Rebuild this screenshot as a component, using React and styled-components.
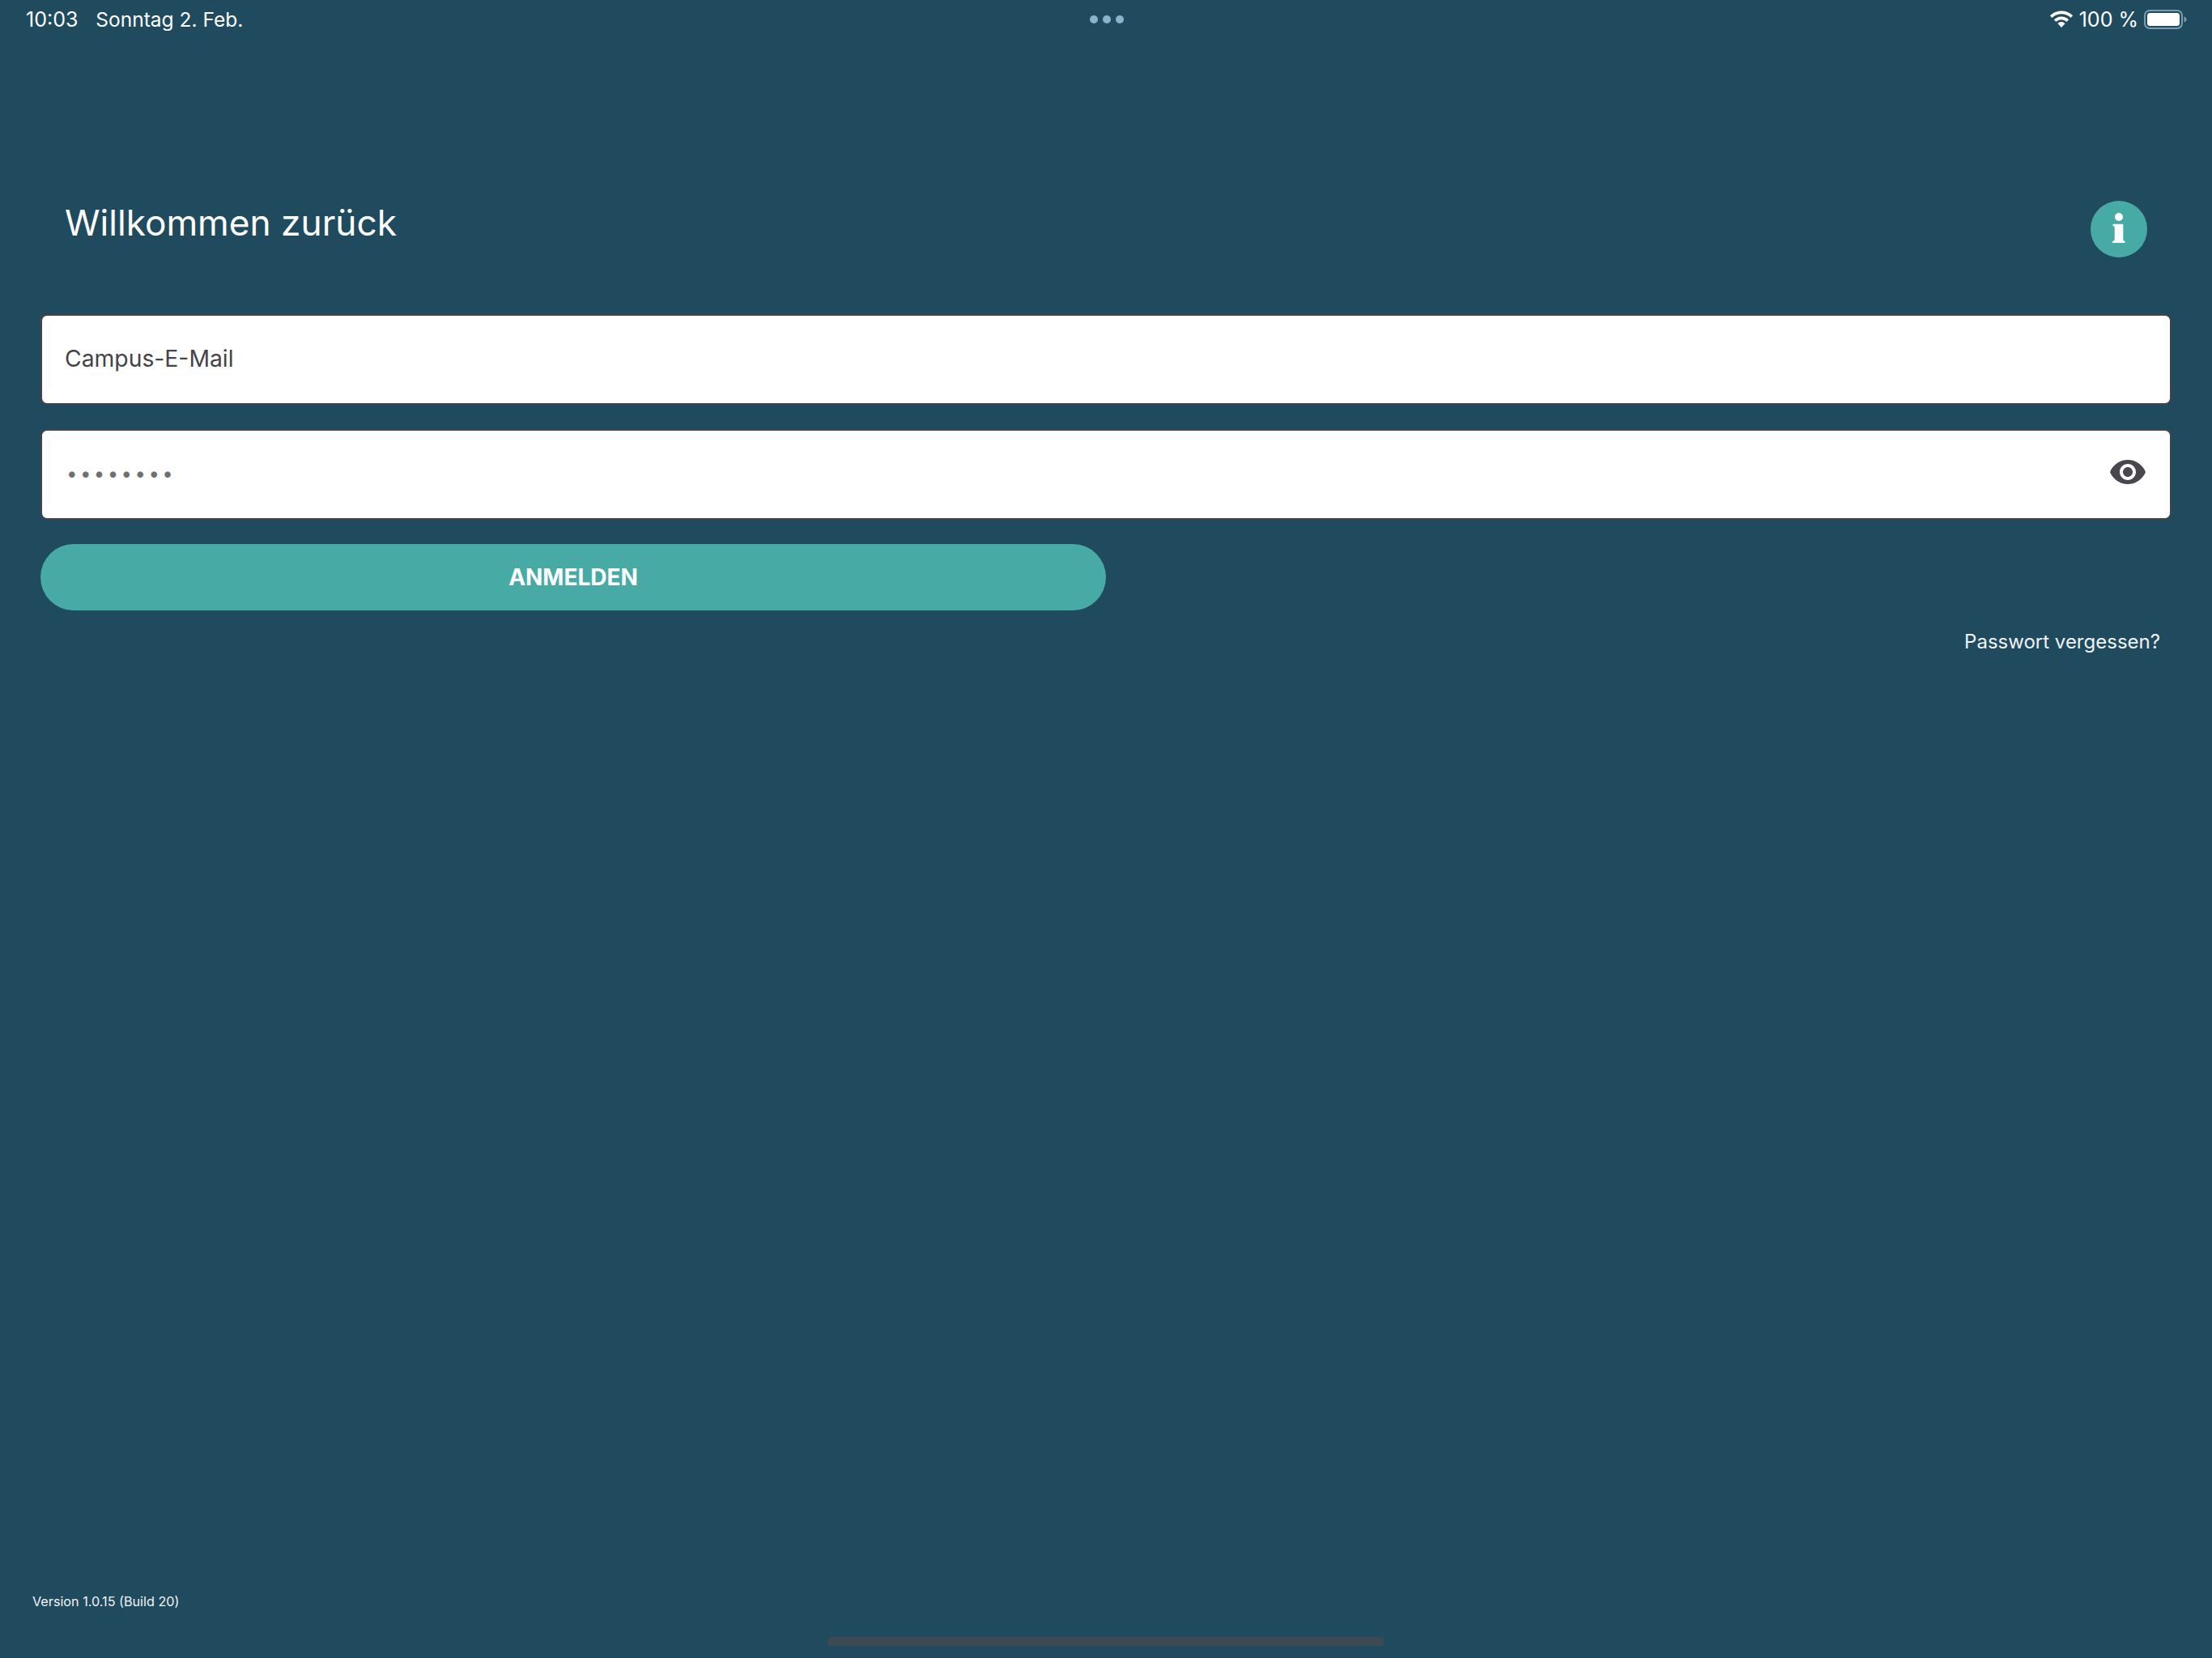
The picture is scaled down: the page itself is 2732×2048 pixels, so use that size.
import React from 'react'
import styled, { createGlobalStyle } from 'styled-components'
import { MdVisibility } from 'react-icons/md'

const GlobalStyle = createGlobalStyle`
  html, body {
    margin: 0;
    padding: 0;
    background: #204a5e;
  }
  body {
    font-family: Inter, "Noto Sans", sans-serif;
  }
`

const Page = styled.div`
  width: 2732px;
  height: 2048px;
  background: #204a5e;
  display: flex;
  flex-direction: column;
  overflow: hidden;
`

const StatusBar = styled.div`
  height: 47px;
  padding: 0 30px 0 32px;
  display: grid;
  grid-template-columns: 1fr auto 1fr;
  align-items: center;
  color: #fff;
  font-size: 24.5px;
`

const StatusLeft = styled.div`
  display: flex;
  gap: 22px;
`

const Time = styled.span`
  font-size: 25px;
`

const Dots = styled.div`
  display: flex;
  gap: 6px;
`

const Dot = styled.span`
  width: 10px;
  height: 10px;
  border-radius: 50%;
  background: #8ab4cb;
`

const StatusRight = styled.div`
  display: flex;
  justify-content: flex-end;
  align-items: center;
  gap: 7px;
  font-size: 25px;
`

const Main = styled.main`
  flex: 1;
  padding: 201px 50px 0 50px;
  display: flex;
  flex-direction: column;
`

const Header = styled.div`
  display: flex;
  justify-content: space-between;
  padding: 0 30px 0 30px;
  height: 140px;
`

const Title = styled.h1`
  margin: 0;
  font-size: 44.2px;
  line-height: 55px;
  font-weight: 400;
  color: #fff;
`

const InfoButton = styled.button`
  width: 70px;
  height: 70px;
  border: 0;
  padding: 0 0 4px;
  border-radius: 50%;
  background: #47aaa5;
  display: flex;
  align-items: center;
  justify-content: center;
`

const Field = styled.div`
  height: 112px;
  box-sizing: border-box;
  background: #fff;
  border: 2px solid #45434a;
  border-radius: 8px;
  padding: 0 28px 2px 28px;
  margin-bottom: 30px;
  display: flex;
  align-items: center;
`

const Input = styled.input`
  flex: 1;
  border: 0;
  outline: 0;
  padding: 0;
  background: transparent;
  font-family: inherit;
  font-size: 28.3px;
  color: #45434a;
  &::placeholder {
    color: #45434a;
    opacity: 1;
  }
  &[type='password'] {
    color: #707070;
    letter-spacing: 3.4px;
    font-size: 24px;
    padding: 0 0 2px 2px;
  }
`

const EyeButton = styled.button`
  border: 0;
  padding: 0;
  margin-bottom: 4px;
  background: transparent;
  color: #4a4650;
  display: flex;
  svg {
    width: 48px;
    height: 48px;
  }
`

const Submit = styled.button`
  width: 1316px;
  height: 82px;
  border: 0;
  border-radius: 41px;
  background: #47aaa5;
  color: #fff;
  font-family: inherit;
  font-size: 28px;
  font-weight: 700;
  text-transform: uppercase;
`

const ForgotRow = styled.div`
  display: flex;
  justify-content: flex-end;
  padding: 23px 14px 0 0;
`

const Forgot = styled.a`
  font-size: 24px;
  line-height: 32px;
  color: #eef3f5;
`

const Version = styled.div`
  padding: 0 0 34px 40px;
  font-size: 16.2px;
  line-height: 20px;
  color: #f0f4f6;
`

const HomeIndicator = styled.div`
  align-self: center;
  width: 688px;
  height: 11px;
  margin-bottom: 15px;
  border-radius: 6px;
  background: #3e4a52;
`

const WifiIcon = () => (
  <svg width="30" height="22" viewBox="0 0 30 22">
    <g fill="none" stroke="#fff" strokeWidth="3.8">
      <path d="M2.2 7.6 A18.5 18.5 0 0 1 27.8 7.6" />
      <path d="M7.2 12.6 A11.2 11.2 0 0 1 22.8 12.6" />
    </g>
    <path d="M10.4 16 A6.5 6.5 0 0 1 19.6 16 L15 21 Z" fill="#fff" />
  </svg>
)

const BatteryIcon = () => (
  <svg width="54" height="24" viewBox="0 0 54 24">
    <rect x="1" y="1" width="46" height="22" rx="6" fill="none" stroke="#7d9bad" strokeWidth="2" />
    <rect x="4" y="4" width="40" height="16" rx="3.5" fill="#fff" />
    <path d="M49.5 8.5 C51.5 9 52.5 10.4 52.5 12 C52.5 13.6 51.5 15 49.5 15.5 Z" fill="#7d9bad" />
  </svg>
)

const InfoGlyph = () => (
  <svg width="16" height="37" viewBox="0 0 16 37" fill="#fff">
    <circle cx="8" cy="5" r="5" />
    <path d="M0.5 13.8 H13.3 V33 Q13.3 34.8 15.5 35 V37 H0 V35 Q2.7 34.8 2.7 33 V18 Q2.7 16.2 0.5 16 Z" />
  </svg>
)

export default function App() {
  return (
    <Page>
      <GlobalStyle />
      <StatusBar>
        <StatusLeft>
          <Time>10:03</Time>
          <span>Sonntag 2. Feb.</span>
        </StatusLeft>
        <Dots>
          <Dot />
          <Dot />
          <Dot />
        </Dots>
        <StatusRight>
          <WifiIcon />
          <span>100 %</span>
          <BatteryIcon />
        </StatusRight>
      </StatusBar>
      <Main>
        <Header>
          <Title>Willkommen zurück</Title>
          <InfoButton aria-label="Info">
            <InfoGlyph />
          </InfoButton>
        </Header>
        <Field>
          <Input type="email" placeholder="Campus-E-Mail" />
        </Field>
        <Field>
          <Input type="password" defaultValue="12345678" />
          <EyeButton aria-label="Passwort anzeigen">
            <MdVisibility />
          </EyeButton>
        </Field>
        <Submit>Anmelden</Submit>
        <ForgotRow>
          <Forgot>Passwort vergessen?</Forgot>
        </ForgotRow>
      </Main>
      <Version>Version 1.0.15 (Build 20)</Version>
      <HomeIndicator />
    </Page>
  )
}
